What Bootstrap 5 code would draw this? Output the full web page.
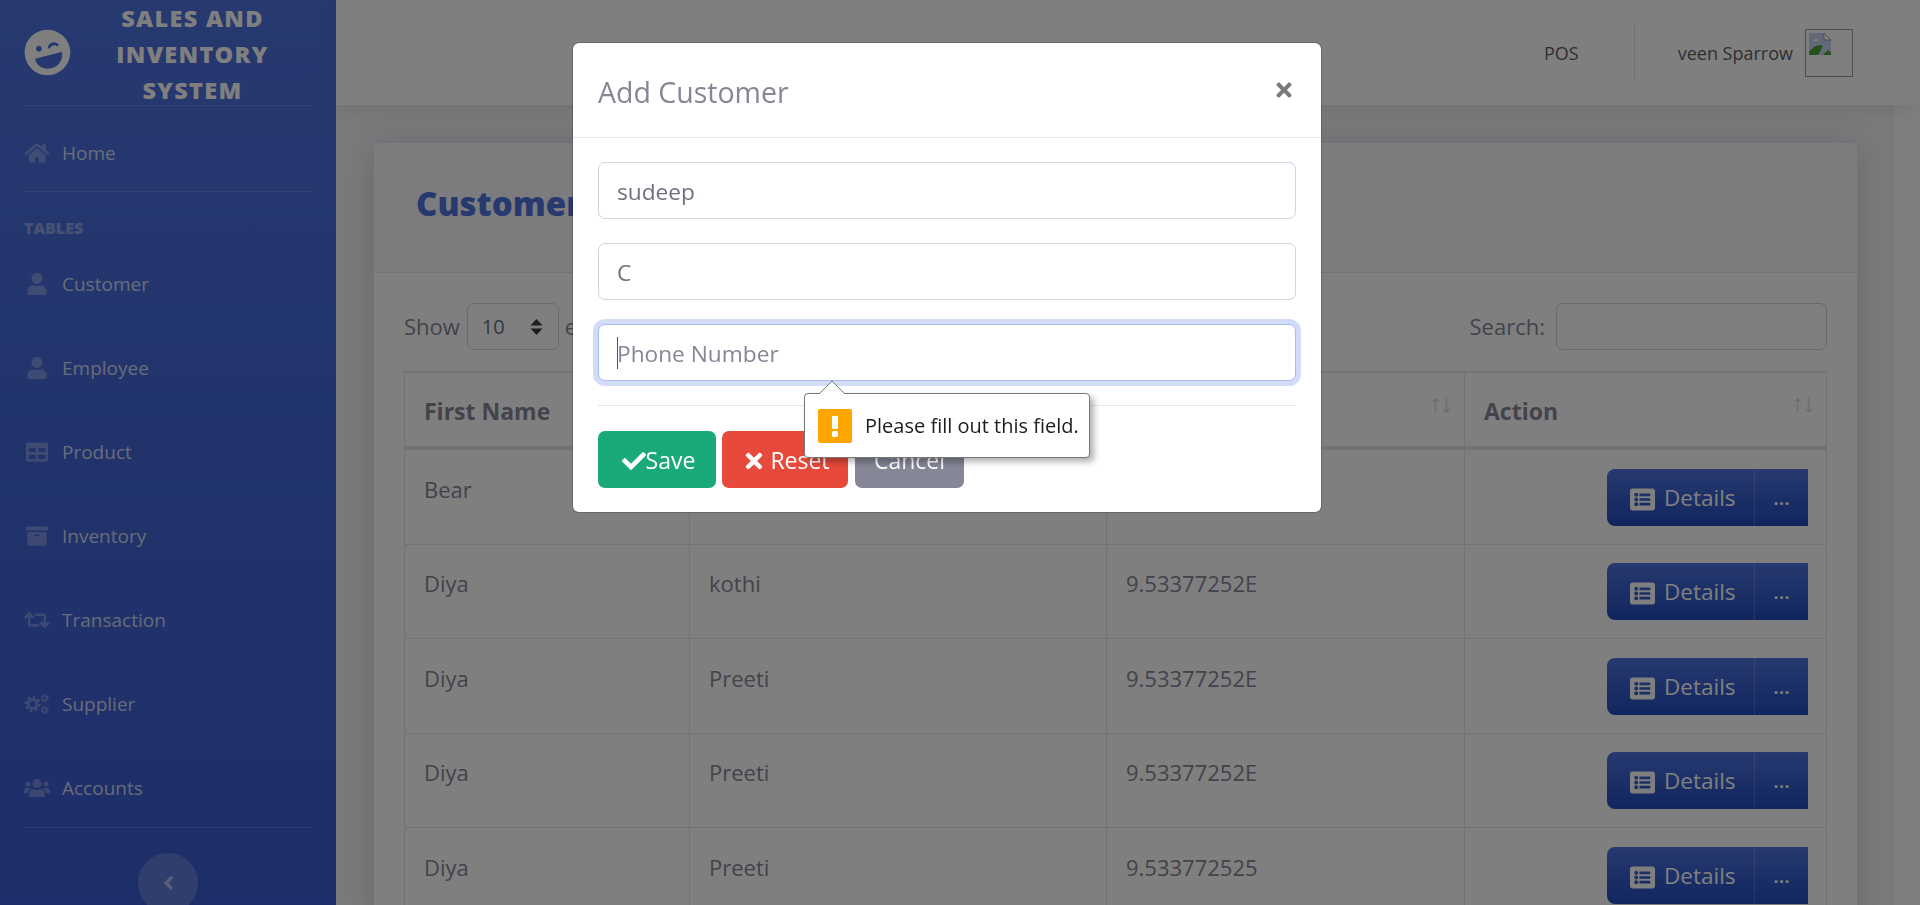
<!DOCTYPE html>
<html lang="en">
<head>
<meta charset="utf-8">
<title>Customer</title>
<link rel="stylesheet" href="https://cdn.jsdelivr.net/npm/bootstrap@5.3.0/dist/css/bootstrap.min.css">
<style>
html{font-size:20px}
body{font-family:"Open Sans","Noto Sans",sans-serif;color:#858796;background:#fff;overflow:hidden;height:905px}
.app-shell{height:905px;overflow:hidden}
.side-rail{width:336px;flex:0 0 336px;height:905px;background:linear-gradient(180deg,#4e73df 0%,#3a5bd2 100%);padding:0 24px;overflow:hidden}
.brand-row{height:106px;border-bottom:1px solid rgba(255,255,255,.15);margin:0}
.brand-logo{width:47px;height:47px;color:#fff;transform:rotate(-15deg);flex:none}
.brand-text{flex:1;color:#fff;font-weight:800;font-size:23.5px;line-height:36px;letter-spacing:1.3px;text-align:center;text-transform:uppercase;padding:0 28px 0 30px;margin-top:3px}
.rail-link{height:84px;color:rgba(255,255,255,.75);font-size:19px;text-decoration:none}
.rail-home{height:86px;padding-top:9px;border-bottom:1px solid rgba(255,255,255,.15)}
.rail-ico{width:26px;height:22px;margin-right:12px;color:rgba(255,255,255,.3);fill:currentColor;flex:none}
.rail-head{color:rgba(255,255,255,.4);font-size:16px;font-weight:800;line-height:18px;padding-top:27px;height:50px}
.rail-end{border-top:1px solid rgba(255,255,255,.15);margin-top:-3px}
.rail-toggle{width:60px;height:60px;border-radius:50%;background:rgba(255,255,255,.2);margin:25px auto 0;color:rgba(255,255,255,.5)}
.rail-toggle svg{width:13px;height:22px;fill:currentColor}
.top-strip{height:105px;background:#fff;padding-right:67px;color:#5e5e66;font-size:18px;box-shadow:0 3px 20px rgba(58,59,69,.12);position:relative}
.top-pos{margin-right:55px}
.top-div{width:1px;height:57px;background:#e3e6f0;margin-right:43px}
.top-name{padding-top:2px}
.avatar-box{width:48px;height:48px;border:1px solid #9a9aa6;margin-left:12px;padding:2px}
.avatar-box svg{width:24px;height:24px;display:block}
.content-wrap{background:#f4f5f9;margin-right:25px;padding:37px 37px 0;height:800px;overflow:hidden}
.page-card{border:1px solid #e3e6f0;border-radius:7px;background:#fff;box-shadow:0 3px 35px rgba(58,59,69,.18)}
.page-card-head{height:130px;background:#f8f9fc;border-bottom:1px solid #e3e6f0;padding:0 0 8px 42px}
.page-card-title{color:#4e73df;font-weight:800;font-size:33px;margin:0}
.page-card-body{padding:30px 30px 0}
.dt-controls{height:68px;font-size:22px;line-height:47px}
.dt-select{width:92px;height:47px;border:1px solid #d1d3e2;border-radius:7px;margin:0 6px 0 7px;padding:0 14px;color:#6e707e;font-size:20px}
.dt-select svg{width:15px;height:18px;fill:#3a3a44}
.dt-search{width:271px;height:47px;border:1px solid #d1d3e2;border-radius:7px;margin-left:11px}
.dt-table{table-layout:fixed;width:1423px;margin:0;color:#858796;border-color:#e3e6f0;--bs-table-color:#858796;--bs-table-bg:transparent}
.dt-table th:nth-child(1){width:285px}
.dt-table th:nth-child(2){width:417px}
.dt-table th:nth-child(3){width:358px}
.dt-table thead tr{border-top-width:2px}
.dt-table th{position:relative;font-size:23px;font-weight:700;color:#858796;height:76px;padding:3px 18px 0 19px;vertical-align:middle;border-bottom:4px solid #e3e6f0}
.dt-table td{padding:18.5px 18px 18px 19px;line-height:40px;font-size:22px;height:94.5px;vertical-align:top;border-color:#e3e6f0}
.sort-marks{position:absolute;right:13px;top:14px;font-size:26px;font-weight:400;line-height:30px;color:#d6d7dd;letter-spacing:-2px}
.act-group{height:57px;width:201px;margin-left:auto;color:#fff;background:linear-gradient(180deg,#4e73df 0%,#224abe 100%);border-radius:8px 0 0 8px;font-size:22.5px;line-height:57px}
.act-main{width:148px;padding-left:23px;border-right:1px solid rgba(255,255,255,.2);white-space:nowrap}
.act-main svg{width:25px;height:25px;fill:currentColor;margin-right:9px}
.act-more{flex:1;text-align:center;font-size:20px;font-weight:600}
.modal.shown-modal{display:block;padding-right:26px}
.modal-backdrop.show{opacity:.5}
.shown-modal .modal-dialog{max-width:750px;margin:42px auto 0}
.shown-modal .modal-content{border-radius:7px;position:relative}
.add-head{height:95px;padding:4px 25px 0;border-bottom:1px solid #e3e6f0}
.add-title{font-size:28.5px;font-weight:400;color:#858796;margin:0;line-height:1.5}
.add-close{width:22px;height:22px;color:#7a7a7a;fill:currentColor;margin:-4px 1px 0 0}
.add-body{padding:24px 25px 24px}
.add-input{height:57px;border:1px solid #d1d3e2;border-radius:7px;font-size:22.7px;color:#6e707e;padding:2px 18px 0;margin-bottom:24px;display:block;width:100%}
.add-input::placeholder{color:#858796}
.add-focus{border-color:#a9bbef;box-shadow:0 0 0 5px rgba(78,115,223,.25);outline:0;margin-bottom:24px}
.add-rule{border-top:1px solid #e3e6f0;margin:0 0 25px;opacity:1}
.add-btn{height:57px;border-radius:7px;color:#fff;font-size:23px;border:0;padding:2px 0 0;display:inline-flex;align-items:center;justify-content:center}
.add-btn svg{fill:#fff}
.btn-save{width:118px;background:#1aa97a;margin-right:6px;padding-left:3px}
.btn-reset{width:126px;background:#e74a3b;margin-right:7px;padding-left:4px}
.btn-cancel{width:109px;background:#858796}
.input-caret{position:absolute;left:44px;top:294px;width:1px;height:32px;background:#555}
.tip-pop{position:absolute;left:231px;top:350px;width:286px;height:65px;background:#fff;border:1px solid #777;border-radius:4px;box-shadow:4px 4px 6px rgba(0,0,0,.3);color:#1c1c1c;font-size:20px;padding-left:13px;z-index:3}
.tip-arrow{position:absolute;left:14px;top:-13px;width:28px;height:13px;overflow:visible}
.tip-warn{width:34px;height:34px;background:#ffa500;border-radius:2px;margin-right:13px;flex:none}
</style>
</head>
<body>
<svg width="0" height="0" class="position-absolute">
<symbol id="i-home" viewBox="0 0 576 512"><path d="M280.37 148.26L96 300.11V464a16 16 0 0 0 16 16l112.06-.29a16 16 0 0 0 15.92-16V368a16 16 0 0 1 16-16h64a16 16 0 0 1 16 16v95.64a16 16 0 0 0 16 16.05L464 480a16 16 0 0 0 16-16V300L295.67 148.26a12.19 12.19 0 0 0-15.3 0zM571.6 251.47L488 182.56V44.05a12 12 0 0 0-12-12h-56a12 12 0 0 0-12 12v72.61L318.47 43a48 48 0 0 0-61 0L4.34 251.47a12 12 0 0 0-1.6 16.9l25.5 31A12 12 0 0 0 45.15 301l235.22-193.74a12.19 12.19 0 0 1 15.3 0L530.9 301a12 12 0 0 0 16.9-1.6l25.5-31a12 12 0 0 0-1.7-16.93z"/></symbol>
<symbol id="i-user" viewBox="0 0 448 512"><path d="M224 256c70.7 0 128-57.3 128-128S294.7 0 224 0 96 57.3 96 128s57.3 128 128 128zm89.6 32h-16.7c-22.2 10.2-46.9 16-72.9 16s-50.6-5.8-72.9-16h-16.7C60.2 288 0 348.2 0 422.4V464c0 26.5 21.5 48 48 48h352c26.5 0 48-21.5 48-48v-41.6c0-74.2-60.2-134.4-134.4-134.4z"/></symbol>
<symbol id="i-table" viewBox="0 0 512 512"><path d="M464 32H48C21.49 32 0 53.49 0 80v352c0 26.51 21.49 48 48 48h416c26.51 0 48-21.49 48-48V80c0-26.51-21.49-48-48-48zM224 416H64v-96h160v96zm0-160H64v-96h160v96zm224 160H288v-96h160v96zm0-160H288v-96h160v96z"/></symbol>
<symbol id="i-box" viewBox="0 0 512 512"><path d="M32 448c0 17.7 14.3 32 32 32h384c17.7 0 32-14.3 32-32V160H32v288zm160-212c0-6.6 5.4-12 12-12h104c6.6 0 12 5.4 12 12v8c0 6.6-5.4 12-12 12H204c-6.6 0-12-5.4-12-12v-8zM480 32H32C14.3 32 0 46.3 0 64v48c0 8.8 7.2 16 16 16h480c8.8 0 16-7.2 16-16V64c0-17.7-14.3-32-32-32z"/></symbol>
<symbol id="i-retweet" viewBox="0 0 640 512"><path d="M629.657 343.598L528.971 444.284c-9.373 9.372-24.568 9.372-33.941 0L394.343 343.598c-9.373-9.373-9.373-24.569 0-33.941l10.823-10.823c9.562-9.562 25.133-9.34 34.419.492L480 342.118V160H292.451a24.005 24.005 0 0 1-16.971-7.029l-16-16C244.361 121.851 255.069 96 276.451 96H520c13.255 0 24 10.745 24 24v222.118l40.416-42.792c9.285-9.831 24.856-10.054 34.419-.492l10.823 10.823c9.372 9.372 9.372 24.568-.001 33.941zm-265.138 15.431A23.999 23.999 0 0 0 347.548 352H160V169.881l40.416 42.792c9.286 9.831 24.856 10.054 34.419.491l10.822-10.822c9.373-9.373 9.373-24.569 0-33.941L144.971 67.716c-9.373-9.373-24.569-9.373-33.941 0L10.343 168.402c-9.373 9.373-9.373 24.569 0 33.941l10.822 10.822c9.563 9.563 25.133 9.34 34.419-.491L96 169.881V392c0 13.255 10.745 24 24 24h243.549c21.382 0 32.09-25.851 16.971-40.971l-16.001-16z"/></symbol>
<symbol id="i-cogs" viewBox="0 0 640 512"><g fill="none" stroke="currentColor"><circle cx="210" cy="256" r="110" stroke-width="75"/><circle cx="210" cy="256" r="170" stroke-width="60" stroke-dasharray="67 66.5"/><circle cx="510" cy="110" r="55" stroke-width="38"/><circle cx="510" cy="110" r="85" stroke-width="34" stroke-dasharray="33 33.7"/><circle cx="510" cy="402" r="55" stroke-width="38"/><circle cx="510" cy="402" r="85" stroke-width="34" stroke-dasharray="33 33.7"/></g></symbol>
<symbol id="i-users" viewBox="0 0 640 512"><path d="M96 224c35.3 0 64-28.7 64-64s-28.7-64-64-64-64 28.7-64 64 28.7 64 64 64zm448 0c35.3 0 64-28.7 64-64s-28.7-64-64-64-64 28.7-64 64 28.7 64 64 64zm32 32h-64c-17.6 0-33.5 7.1-45.1 18.6 40.3 22.1 68.9 62 75.1 109.4h66c17.7 0 32-14.3 32-32v-32c0-35.3-28.7-64-64-64zm-256 0c61.9 0 112-50.1 112-112S381.9 32 320 32 208 82.1 208 144s50.1 112 112 112zm76.8 32h-8.3c-20.8 10-43.9 16-68.5 16s-47.6-6-68.5-16h-8.3C179.6 288 128 339.6 128 403.2V432c0 26.5 21.5 48 48 48h288c26.5 0 48-21.5 48-48v-28.8c0-63.6-51.6-115.2-115.2-115.2zm-223.7-13.4C161.5 263.1 145.6 256 128 256H64c-35.3 0-64 28.7-64 64v32c0 17.7 14.3 32 32 32h65.9c6.3-47.4 34.9-87.3 75.2-109.4z"/></symbol>
<symbol id="i-list" viewBox="0 0 512 512"><path d="M464 480H48c-26.51 0-48-21.49-48-48V80c0-26.51 21.49-48 48-48h416c26.51 0 48 21.49 48 48v352c0 26.51-21.49 48-48 48zM128 120c-22.091 0-40 17.909-40 40s17.909 40 40 40 40-17.909 40-40-17.909-40-40-40zm0 96c-22.091 0-40 17.909-40 40s17.909 40 40 40 40-17.909 40-40-17.909-40-40-40zm0 96c-22.091 0-40 17.909-40 40s17.909 40 40 40 40-17.909 40-40-17.909-40-40-40zm288-136v-32c0-6.627-5.373-12-12-12H204c-6.627 0-12 5.373-12 12v32c0 6.627 5.373 12 12 12h200c6.627 0 12-5.373 12-12zm0 96v-32c0-6.627-5.373-12-12-12H204c-6.627 0-12 5.373-12 12v32c0 6.627 5.373 12 12 12h200c6.627 0 12-5.373 12-12zm0 96v-32c0-6.627-5.373-12-12-12H204c-6.627 0-12 5.373-12 12v32c0 6.627 5.373 12 12 12h200c6.627 0 12-5.373 12-12z"/></symbol>
<symbol id="i-check" viewBox="0 0 512 512"><path d="M173.898 439.404l-166.4-166.4c-9.997-9.997-9.997-26.206 0-36.204l36.203-36.204c9.997-9.998 26.207-9.998 36.204 0L192 312.69 432.095 72.596c9.997-9.997 26.207-9.997 36.204 0l36.203 36.204c9.997 9.997 9.997 26.206 0 36.204l-294.4 294.401c-9.998 9.997-26.207 9.997-36.204-.001z"/></symbol>
<symbol id="i-times" viewBox="0 0 352 512"><path d="M242.72 256l100.07-100.07c12.28-12.28 12.28-32.19 0-44.48l-22.24-22.24c-12.28-12.28-32.19-12.28-44.48 0L176 189.28 75.93 89.21c-12.28-12.28-32.19-12.28-44.48 0L9.21 111.45c-12.28 12.28-12.28 32.19 0 44.48L109.28 256 9.21 356.07c-12.28 12.28-12.28 32.19 0 44.48l22.24 22.24c12.28 12.28 32.2 12.28 44.48 0L176 322.72l100.07 100.07c12.28 12.28 32.2 12.28 44.48 0l22.24-22.24c12.28-12.28 12.28-32.19 0-44.48L242.72 256z"/></symbol>
</svg>

<div class="d-flex app-shell">
  <aside class="side-rail">
    <div class="brand-row d-flex align-items-center">
      <svg class="brand-logo" viewBox="0 0 496 512" fill="currentColor"><path d="M248 8C111 8 0 119 0 256s111 248 248 248 248-111 248-248S385 8 248 8zm20.1 198.1c4-25.2 34.2-42.1 59.9-42.1s55.9 16.9 59.9 42.1c1.7 11.1-11.4 18.3-19.8 10.8l-9.5-8.5c-14.8-13.2-46.2-13.2-61 0L288 217c-8.4 7.4-21.6.3-19.9-10.9zM168 160c17.7 0 32 14.3 32 32s-14.3 32-32 32-32-14.3-32-32 14.3-32 32-32zm230.9 146C390 377 329.4 432 256 432h-16c-73.4 0-134-55-142.9-126-1.2-9.5 6.3-18 15.9-18h270c9.6 0 17.1 8.4 15.9 18z"/></svg>
      <div class="brand-text">Sales and Inventory System</div>
    </div>
    <a href="#" class="rail-link rail-home d-flex align-items-center"><svg class="rail-ico"><use href="#i-home"/></svg>Home</a>
    <div class="rail-head">TABLES</div>
    <a href="#" class="rail-link d-flex align-items-center"><svg class="rail-ico"><use href="#i-user"/></svg>Customer</a>
    <a href="#" class="rail-link d-flex align-items-center"><svg class="rail-ico"><use href="#i-user"/></svg>Employee</a>
    <a href="#" class="rail-link d-flex align-items-center"><svg class="rail-ico"><use href="#i-table"/></svg>Product</a>
    <a href="#" class="rail-link d-flex align-items-center"><svg class="rail-ico"><use href="#i-box"/></svg>Inventory</a>
    <a href="#" class="rail-link d-flex align-items-center"><svg class="rail-ico"><use href="#i-retweet"/></svg>Transaction</a>
    <a href="#" class="rail-link d-flex align-items-center"><svg class="rail-ico"><use href="#i-cogs"/></svg>Supplier</a>
    <a href="#" class="rail-link d-flex align-items-center"><svg class="rail-ico"><use href="#i-users"/></svg>Accounts</a>
    <div class="rail-end"></div>
    <div class="rail-toggle d-flex align-items-center justify-content-center"><svg viewBox="0 0 256 512"><path d="M31.7 239l136-136c9.4-9.4 24.6-9.4 33.9 0l22.6 22.6c9.4 9.4 9.4 24.6 0 33.9L127.9 256l96.4 96.4c9.4 9.4 9.4 24.6 0 33.9L201.7 409c-9.4 9.4-24.6 9.4-33.9 0l-136-136c-9.5-9.4-9.5-24.6-.1-34z"/></svg></div>
  </aside>
  <div class="flex-grow-1">
    <header class="top-strip d-flex align-items-center justify-content-end">
      <span class="top-pos top-name">POS</span>
      <span class="top-div"></span>
      <span class="top-name">veen Sparrow</span>
      <span class="avatar-box"><svg viewBox="0 0 24 24"><path d="M1 1h15l7 7v15H1z" fill="#c6d3ec"/><path d="M16 1v7h7z" fill="#fff" stroke="#8a8a8a" stroke-width=".8"/><path d="M1 23v-3c4-5 9-8 14-6l-5 9z" fill="#4aa33a"/><path d="M15 23l5-5 3 3v2z" fill="#4aa33a"/><path d="M5 9c1-3 4-3 6 0z" fill="#fff"/></svg></span>
    </header>
    <main class="content-wrap">
      <section class="page-card">
        <div class="page-card-head d-flex align-items-center"><h4 class="page-card-title">Customers</h4></div>
        <div class="page-card-body">
          <div class="dt-controls d-flex justify-content-between">
            <div class="d-flex">Show <span class="dt-select d-flex align-items-center justify-content-between"><span>10</span><svg viewBox="0 0 14 18"><path d="M7 1l6 6.500H1zM7 17l6-6.500H1z"/></svg></span> entries</div>
            <div class="d-flex">Search:<span class="dt-search"></span></div>
          </div>
          <table class="table table-bordered dt-table">
            <thead><tr><th>First Name<span class="sort-marks">↑↓</span></th><th>Last Name<span class="sort-marks">↑↓</span></th><th>Phone Number<span class="sort-marks">↑↓</span></th><th>Action<span class="sort-marks">↑↓</span></th></tr></thead>
            <tbody>
              <tr><td>Bear</td><td>Grylls</td><td>9.53377252E</td><td><div class="act-group d-flex"><span class="act-main"><svg><use href="#i-list"/></svg>Details</span><span class="act-more">...</span></div></td></tr>
              <tr><td>Diya</td><td>kothi</td><td>9.53377252E</td><td><div class="act-group d-flex"><span class="act-main"><svg><use href="#i-list"/></svg>Details</span><span class="act-more">...</span></div></td></tr>
              <tr><td>Diya</td><td>Preeti</td><td>9.53377252E</td><td><div class="act-group d-flex"><span class="act-main"><svg><use href="#i-list"/></svg>Details</span><span class="act-more">...</span></div></td></tr>
              <tr><td>Diya</td><td>Preeti</td><td>9.53377252E</td><td><div class="act-group d-flex"><span class="act-main"><svg><use href="#i-list"/></svg>Details</span><span class="act-more">...</span></div></td></tr>
              <tr><td>Diya</td><td>Preeti</td><td>9.533772525</td><td><div class="act-group d-flex"><span class="act-main"><svg><use href="#i-list"/></svg>Details</span><span class="act-more">...</span></div></td></tr>
            </tbody>
          </table>
        </div>
      </section>
    </main>
  </div>
</div>

<div class="modal-backdrop show"></div>
<div class="modal shown-modal">
  <div class="modal-dialog">
    <div class="modal-content">
      <div class="add-head d-flex align-items-center justify-content-between">
        <h5 class="add-title">Add Customer</h5>
        <svg class="add-close"><use href="#i-times"/></svg>
      </div>
      <div class="add-body">
        <input class="add-input" value="sudeep" placeholder="First Name">
        <input class="add-input" value="C" placeholder="Last Name">
        <input class="add-input add-focus" placeholder="Phone Number">
        <hr class="add-rule">
        <div class="d-flex">
          <button class="add-btn btn-save"><svg width="24" height="24"><use href="#i-check"/></svg>Save</button>
          <button class="add-btn btn-reset"><svg width="20" height="24"><use href="#i-times"/></svg>&nbsp;Reset</button>
          <button class="add-btn btn-cancel">Cancel</button>
        </div>
      </div>
      <span class="input-caret"></span>
      <div class="tip-pop d-flex align-items-center">
        <svg class="tip-arrow" viewBox="0 0 28 13"><path d="M0 13L13 0l13 13" fill="#fff" stroke="#777"/></svg>
        <span class="tip-warn d-flex align-items-center justify-content-center"><svg width="8" height="24" viewBox="0 0 8 24"><rect x="1" y="2" width="6" height="13" rx="1" fill="#fff"/><rect x="1" y="17" width="6" height="6" rx="1.500" fill="#fff"/></svg></span>
        Please fill out this field.
      </div>
    </div>
  </div>
</div>
<script src="https://cdn.jsdelivr.net/npm/bootstrap@5.3.0/dist/js/bootstrap.bundle.min.js"></script>
</body>
</html>
